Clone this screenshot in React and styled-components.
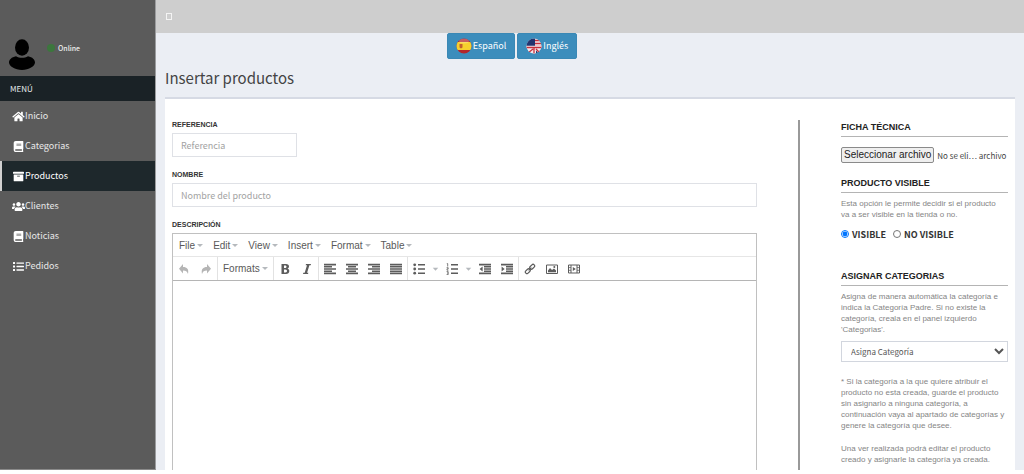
import React from 'react';
import styled, { createGlobalStyle, css } from 'styled-components';
import { FaHome, FaBook, FaArchive, FaUsers, FaList } from 'react-icons/fa';

const sans = "'Noto Sans CJK SC', 'Noto Sans', sans-serif";
const arial = "'Liberation Sans', Arial, sans-serif";

const GlobalStyle = createGlobalStyle`
  * {
    box-sizing: border-box;
  }

  body {
    margin: 0;
    background: #fff;
    color: #333;
    font-family: ${sans};
    font-size: 9px;
  }
`;

const Page = styled.div`
  display: flex;
  height: calc(100vh - 4px);
  overflow: hidden;
`;

const Sidebar = styled.aside`
  flex: 0 0 156px;
  background: #5b5b5b;
  border-right: 1px solid #9b9c9e;
  border-bottom: 1px solid #8a8a8a;
`;

const UserPanel = styled.div`
  display: flex;
  align-items: flex-start;
  gap: 12px;
  height: 76px;
  padding: 39px 9px 0;
`;

const Status = styled.div`
  display: flex;
  align-items: center;
  gap: 3px;
  height: 18px;
  color: #eee;
  font-size: 7px;
  font-weight: 500;
`;

const Dot = styled.span`
  width: 8px;
  height: 8px;
  border-radius: 50%;
  background: #3c763d;
`;

const MenuHeader = styled.div`
  height: 25px;
  padding-left: 10px;
  background: #1a2226;
  color: #e4e8ea;
  font-size: 8px;
  line-height: 25px;
`;

const Menu = styled.nav`
  display: flex;
  flex-direction: column;
`;

const MenuLink = styled.a`
  display: flex;
  align-items: center;
  height: 30px;
  padding-left: 10px;
  border-left: 2px solid transparent;
  color: #e8e8e8;
  font-size: 9px;
  line-height: 12px;
  text-decoration: none;

  svg {
    width: 13px;
    height: 11px;
    color: #fff;
  }

  ${props =>
    props.$active &&
    css`
      background: #1e282c;
      border-left-color: #d0d0d0;
      color: #fff;
    `}
`;

const Content = styled.div`
  flex: 1;
  display: flex;
  flex-direction: column;
  min-width: 0;
  background: #ebeef4;
`;

const TopBar = styled.header`
  flex: 0 0 33px;
  display: flex;
  align-items: center;
  padding: 0 10px;
  background: #cecece;
`;

const Toggle = styled.button`
  width: 6px;
  height: 7px;
  padding: 0;
  border: 1px solid #f4f4f4;
  background: transparent;
`;

const Languages = styled.div`
  display: flex;
  justify-content: center;
  gap: 2px;
  padding-right: 156px;
`;

const LanguageButton = styled.button`
  display: flex;
  align-items: center;
  gap: 1px;
  height: 26px;
  padding: 0 8px;
  border: 1px solid #3a88b5;
  border-radius: 2px;
  background: #3c8dbc;
  color: #fff;
  font-family: ${sans};
  font-size: 9px;
  line-height: 12px;
`;

const Title = styled.h1`
  margin: 9px 9px 9px;
  color: #444;
  font-size: 15px;
  font-weight: 400;
  line-height: 20px;
`;

const Panel = styled.main`
  flex: 1;
  display: grid;
  grid-template-columns: minmax(0, 1fr) 2px 167px;
  column-gap: 41px;
  min-height: 0;
  margin: 0 9px;
  padding: 21px 7px 0;
  border-top: 2px solid #d6dae4;
  background: #fff;
`;

const Form = styled.form`
  display: flex;
  flex-direction: column;
  gap: 14px;
  min-height: 0;
`;

const Field = styled.div`
  display: flex;
  flex-direction: column;
  gap: 4px;
  min-height: 0;
  flex: ${props => (props.$grow ? 1 : 'none')};
`;

const Label = styled.label`
  color: #333;
  font-family: ${arial};
  font-size: 7px;
  font-weight: 700;
  line-height: 9px;
`;

const Input = styled.input`
  width: ${props => (props.$short ? '125px' : '100%')};
  height: 24px;
  margin-bottom: -1px;
  padding: 0 8px;
  border: 1px solid #dfe1e6;
  border-radius: 0;
  background: #fff;
  font-family: ${sans};
  font-size: 9px;

  &::placeholder {
    color: #a2a2a2;
  }
`;

const Editor = styled.div`
  flex: 1;
  display: flex;
  flex-direction: column;
  min-height: 0;
  border: 1px solid #c0c0c0;
  border-bottom: 0;
  font-family: ${arial};
`;

const MenuBar = styled.div`
  display: flex;
  height: 23px;
  padding-left: 1px;
  border-bottom: 1px solid #e6e6e6;
`;

const ToolBar = styled.div`
  display: flex;
  height: 24px;
  border-bottom: 1px solid #b5b5b5;
`;

const ToolGroup = styled.div`
  display: flex;

  & + & {
    border-left: 1px solid #e2e2e2;
  }
`;

const TextButton = styled.button`
  display: flex;
  align-items: center;
  gap: 2px;
  padding: 0 5px;
  border: 0;
  background: transparent;
  color: #595959;
  font-family: ${arial};
  font-size: 10px;

  &::after {
    content: '';
    border: 3px solid transparent;
    border-top-color: #b5b9bd;
    border-bottom: 0;
  }
`;

const ToolButton = styled.button`
  display: flex;
  align-items: center;
  justify-content: center;
  width: ${props => (props.$narrow ? '11px' : '22px')};
  padding: 0;
  border: 0;
  background: transparent;
  color: ${props => (props.disabled ? '#b5b5b5' : '#5c5c5c')};
`;

const Body = styled.textarea`
  flex: 1;
  width: 100%;
  padding: 8px;
  border: 0;
  outline: 0;
  resize: none;
  font-family: ${arial};
  font-size: 9px;
`;

const Divider = styled.div`
  background: #999;
`;

const Side = styled.aside`
  min-width: 0;
  color: #858585;
  font-family: ${arial};
  font-size: 8px;
  line-height: 11px;
`;

const SideTitle = styled.h2`
  height: 17px;
  margin: 0 0 5px;
  border-bottom: 1px solid #b4b4b4;
  color: #222;
  font-size: 9px;
  font-weight: 700;
  line-height: 14px;
`;

const SideText = styled.p`
  margin: 0 0 12px;
  padding-right: 3px;
`;

const FileRow = styled.label`
  display: flex;
  align-items: center;
  gap: 3px;
  height: 16px;
  margin: 10px -6px 13px 0;
  color: #444;
  font-family: ${sans};
  font-size: 8px;
  white-space: nowrap;
`;

const FileInput = styled.input`
  width: 0;
  height: 0;
  margin: 0 -3px 0 0;
  opacity: 0;
`;

const FileButton = styled.span`
  padding: 0 2px;
  border: 1px solid #8a8a8a;
  border-radius: 2px;
  background: #efefef;
  color: #222;
  font-family: ${arial};
  font-size: 10px;
  line-height: 14px;
`;

const Radios = styled.div`
  display: flex;
  gap: 7px;
  height: 14px;
  margin: -5px 0 28px;
`;

const RadioLabel = styled.label`
  display: flex;
  align-items: center;
  gap: 3px;
  color: #333;
  font-family: ${sans};
  font-size: 9px;
  font-weight: 700;

  input {
    width: 8px;
    height: 8px;
    margin: 0;
  }
`;

const Select = styled.select`
  width: 100%;
  height: 21px;
  margin: -6px 0 14px;
  padding: 0 5px;
  border: 1px solid #d2d6de;
  border-radius: 0;
  background: #fff;
  color: #555;
  font-family: ${sans};
  font-size: 8px;
`;

const links = [
  { text: 'Inicio', icon: FaHome },
  { text: 'Categorias', icon: FaBook },
  { text: 'Productos', icon: FaArchive, active: true },
  { text: 'Clientes', icon: FaUsers },
  { text: 'Noticias', icon: FaBook },
  { text: 'Pedidos', icon: FaList }
];

const menus = ['File', 'Edit', 'View', 'Insert', 'Format', 'Table'];

const Avatar = () => (
  <svg width="26" height="31" viewBox="0 0 26 31" aria-hidden="true">
    <ellipse cx="13" cy="8.5" rx="7" ry="8.3" />
    <path d="M7 17.2c2 1 3.600 1.500 6 1.500s4-.5 6-1.500c4.500.8 7 3.500 7 6.300 0 3.500-6 7.500-13 7.500S0 27 0 23.500c0-2.800 2.500-5.500 7-6.300z" />
  </svg>
);

const SpainFlag = () => (
  <svg width="16" height="16" viewBox="0 0 16 16" aria-hidden="true">
    <clipPath id="es">
      <circle cx="8" cy="8" r="7.500" />
    </clipPath>
    <g clipPath="url(#es)">
      <path fill="#b3262b" d="M0 0h16v16H0z" />
      <path fill="#f6cf2e" d="M0 4h16v8H0z" />
      <path fill="#c2602e" d="M3.500 6h3v3.500l-1.500 1-1.500-1z" />
      <ellipse cx="8" cy="3" rx="5" ry="2.500" fill="#fff" opacity=".25" />
    </g>
  </svg>
);

const EnglishFlag = () => (
  <svg width="16" height="16" viewBox="0 0 16 16" aria-hidden="true">
    <clipPath id="en">
      <circle cx="8" cy="8" r="7.500" />
    </clipPath>
    <g clipPath="url(#en)">
      <path fill="#f3e9ec" d="M0 0h16v16H0z" />
      <path stroke="#c8303c" strokeWidth="1.500" d="M8 2.500h8M8 5.500h8M8 8.500h8" />
      <path fill="#22356f" d="M0 0h9v8H0zM0 11l5 5H0zM10 12h6v4h-6z" />
      <path stroke="#f3e9ec" strokeWidth="2.500" d="M0 9h16M8 8v8M0 16l7-6M16 16l-7-6" />
      <path stroke="#c8303c" strokeWidth="1.300" d="M0 9.500h16M8 9v7M2 15l5-4M14 15l-4-4" />
    </g>
  </svg>
);

const icons = {
  undo: <path fill="currentColor" d="M5 1v3c4 0 6 2 5 7-.8-2.500-2-3.600-5-3.600v3L1 5.700z" />,
  redo: <path fill="currentColor" d="M7 1v3C3 4 1 6 2 11c.8-2.500 2-3.600 5-3.600v3l4-4.700z" />,
  bold: (
    <path
      fill="currentColor"
      fillRule="evenodd"
      d="M2.500 1H7c2 0 3 1 3 2.500C10 4.600 9.400 5.300 8.500 5.700 9.700 6 10.300 6.900 10.300 8c0 1.800-1.300 3-3.300 3H2.500zM5 2.500V5h1.200c1.800 0 1.700-2.500 0-2.500zM5 6.500v3h1.500c2 0 2-3 0-3z"
    />
  ),
  italic: <path fill="currentColor" d="M5 1h5l-.3 1.200H8.400L6.100 9.800h1.300L7 11H2l.3-1.200h1.400L6 2.200H4.700z" />,
  left: <path stroke="currentColor" strokeWidth="1.600" d="M0 1.600h12M0 3.800h8M0 6h12M0 8.200h8M0 10.400h12" />,
  center: <path stroke="currentColor" strokeWidth="1.600" d="M0 1.600h12M2 3.800h8M0 6h12M2 8.200h8M0 10.400h12" />,
  right: <path stroke="currentColor" strokeWidth="1.600" d="M0 1.600h12M4 3.800h8M0 6h12M4 8.200h8M0 10.400h12" />,
  justify: <path stroke="currentColor" strokeWidth="1.600" d="M0 1.600h12M0 3.800h12M0 6h12M0 8.200h12M0 10.400h12" />,
  bullets: (
    <g fill="currentColor">
      <circle cx="1.700" cy="1.800" r="1.400" />
      <circle cx="1.700" cy="6" r="1.400" />
      <circle cx="1.700" cy="10.200" r="1.400" />
      <path d="M5 1h7v1.500H5zM5 5.300h7v1.500H5zM5 9.500h7V11H5z" />
    </g>
  ),
  numbers: (
    <g fill="currentColor">
      <path d="M5 1h7v1.500H5zM5 5.300h7v1.500H5zM5 9.500h7V11H5z" />
      <path fill="none" stroke="currentColor" strokeWidth=".8" d="M.8.600h.9v2.900M.6 4.700h1.600v1.200H1v1.300h1.400M.6 8.600h1.600v3H.6M1 10h1" />
    </g>
  ),
  outdent: (
    <g fill="currentColor">
      <path stroke="currentColor" strokeWidth="1.600" d="M0 1.600h12M5 3.800h7M5 6h7M5 8.200h7M0 10.400h12" />
      <path d="M3.600 3.600v4.800L.6 6z" />
    </g>
  ),
  indent: (
    <g fill="currentColor">
      <path stroke="currentColor" strokeWidth="1.600" d="M0 1.600h12M5 3.800h7M5 6h7M5 8.200h7M0 10.400h12" />
      <path d="M.6 3.600v4.800l3-2.400z" />
    </g>
  ),
  link: (
    <g fill="none" stroke="currentColor" strokeWidth="1.200">
      <rect x="-2.800" y="-1.600" width="5.600" height="3.200" rx="1.600" transform="translate(8.200 3.800) rotate(-45)" />
      <rect x="-2.800" y="-1.600" width="5.600" height="3.200" rx="1.600" transform="translate(3.800 8.200) rotate(-45)" />
      <path d="M4.600 7.400l2.800-2.800" />
    </g>
  ),
  image: (
    <g fill="currentColor">
      <path fill="none" stroke="currentColor" d="M.5 2h11v8.500H.5z" />
      <path d="M2 9.300V7.500l2-2.500 2 2 2-1.500 2 2v1.800z" />
      <circle cx="8.300" cy="4" r="1" />
    </g>
  ),
  media: (
    <g fill="currentColor">
      <path fill="none" stroke="currentColor" d="M.5 2h11v8h-11zM3 2v8M9 2v8" />
      <path fill="none" stroke="currentColor" strokeWidth=".8" d="M.5 4.600H3M.5 7.300H3M9 4.600h2.500M9 7.300h2.500" />
      <path d="M4.800 4v4l3-2z" />
    </g>
  ),
  caret: <path fill="#b5b9bd" d="M3 4.500h6L6 8z" />
};

const Tool = ({ icon, label, narrow, disabled }) => (
  <ToolButton type="button" aria-label={label} $narrow={narrow} disabled={disabled}>
    <svg width="12" height="12" viewBox="0 0 12 12">
      {icons[icon]}
    </svg>
  </ToolButton>
);

const RichEditor = () => (
  <Editor>
    <MenuBar>
      {menus.map(menu => (
        <TextButton type="button" key={menu}>
          {menu}
        </TextButton>
      ))}
    </MenuBar>
    <ToolBar>
      <ToolGroup>
        <Tool icon="undo" label="Undo" disabled />
        <Tool icon="redo" label="Redo" disabled />
      </ToolGroup>
      <ToolGroup>
        <TextButton type="button">Formats</TextButton>
      </ToolGroup>
      <ToolGroup>
        <Tool icon="bold" label="Bold" />
        <Tool icon="italic" label="Italic" />
      </ToolGroup>
      <ToolGroup>
        <Tool icon="left" label="Align left" />
        <Tool icon="center" label="Align center" />
        <Tool icon="right" label="Align right" />
        <Tool icon="justify" label="Justify" />
      </ToolGroup>
      <ToolGroup>
        <Tool icon="bullets" label="Bullet list" />
        <Tool icon="caret" label="Bullet list options" narrow />
        <Tool icon="numbers" label="Numbered list" />
        <Tool icon="caret" label="Numbered list options" narrow />
        <Tool icon="outdent" label="Decrease indent" />
        <Tool icon="indent" label="Increase indent" />
      </ToolGroup>
      <ToolGroup>
        <Tool icon="link" label="Insert link" />
        <Tool icon="image" label="Insert image" />
        <Tool icon="media" label="Insert video" />
      </ToolGroup>
    </ToolBar>
    <Body id="descripcion" />
  </Editor>
);

const App = () => {
  return (
    <>
      <GlobalStyle />
      <Page>
        <Sidebar>
          <UserPanel>
            <Avatar />
            <Status>
              <Dot /> Online
            </Status>
          </UserPanel>
          <MenuHeader>MENÚ</MenuHeader>
          <Menu>
            {links.map(({ text, icon: Icon, active }) => (
              <MenuLink href="#" key={text} $active={active}>
                <Icon /> {text}
              </MenuLink>
            ))}
          </Menu>
        </Sidebar>
        <Content>
          <TopBar>
            <Toggle type="button" aria-label="Menú" />
          </TopBar>
          <Languages>
            <LanguageButton type="button">
              <SpainFlag /> Español
            </LanguageButton>
            <LanguageButton type="button">
              <EnglishFlag /> Inglés
            </LanguageButton>
          </Languages>
          <Title>Insertar productos</Title>
          <Panel>
            <Form>
              <Field>
                <Label htmlFor="referencia">REFERENCIA</Label>
                <Input id="referencia" placeholder="Referencia" $short />
              </Field>
              <Field>
                <Label htmlFor="nombre">NOMBRE</Label>
                <Input id="nombre" placeholder="Nombre del producto" />
              </Field>
              <Field $grow>
                <Label htmlFor="descripcion">DESCRIPCIÓN</Label>
                <RichEditor />
              </Field>
            </Form>
            <Divider />
            <Side>
              <SideTitle>FICHA TÉCNICA</SideTitle>
              <FileRow>
                <FileInput type="file" />
                <FileButton>Seleccionar archivo</FileButton>
                No se eli… archivo
              </FileRow>
              <SideTitle>PRODUCTO VISIBLE</SideTitle>
              <SideText>Esta opción le permite decidir si el producto va a ser visible en la tienda o no.</SideText>
              <Radios>
                <RadioLabel>
                  <input type="radio" name="visible" defaultChecked /> VISIBLE
                </RadioLabel>
                <RadioLabel>
                  <input type="radio" name="visible" /> NO VISIBLE
                </RadioLabel>
              </Radios>
              <SideTitle>ASIGNAR CATEGORIAS</SideTitle>
              <SideText>
                Asigna de manera automática la categoría e indica la Categoría Padre. Si no existe la categoría, creala en
                el panel izquierdo 'Categorias'.
              </SideText>
              <Select aria-label="Categoría">
                <option>Asigna Categoría</option>
              </Select>
              <SideText>
                * Si la categoría a la que quiere atribuir el producto no esta creada, guarde el producto sin asignarlo a
                ninguna categoría, a continuación vaya al apartado de categorías y genere la categoría que desee.
              </SideText>
              <SideText>Una ver realizada podrá editar el producto creado y asignarle la categoría ya creada.</SideText>
            </Side>
          </Panel>
        </Content>
      </Page>
    </>
  );
};

export default App;
